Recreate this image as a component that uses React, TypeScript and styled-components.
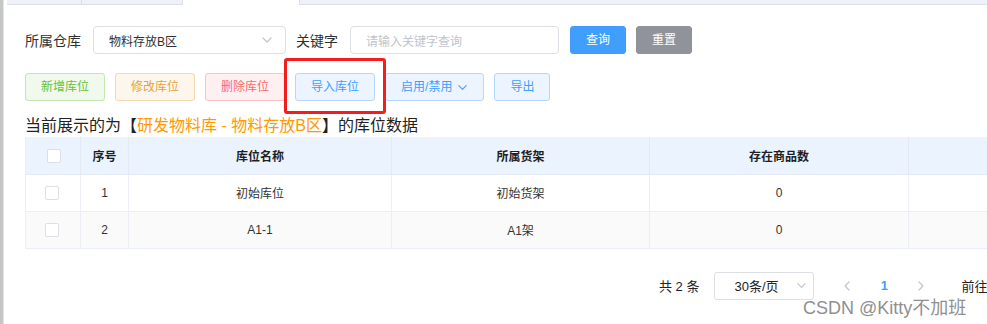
import React from "react";
import styled, { createGlobalStyle, css } from "styled-components";

const GlobalStyle = createGlobalStyle`
  html, body {
    margin: 0;
    padding: 0;
    background: #fff;
    overflow: hidden;
  }
  body {
    font-family: "Liberation Sans", "Noto Sans CJK SC", Arial, sans-serif;
    color: #303133;
  }
  * { box-sizing: border-box; }
`;

const Page = styled.div`
  display: flex;
  width: 987px;
  height: 324px;
  position: relative;
  overflow: hidden;
`;

const SideEdge = styled.div`
  width: 4px;
  flex: none;
  background: #c6c6c6;
  border-right: 1px solid #e4e4e4;
`;

const Main = styled.div`
  flex: 1;
  min-width: 0;
  overflow: hidden;
`;

/* tab strip cut off at the top */
const TabStrip = styled.div`
  display: flex;
  height: 5px;
  padding-left: 3px;
`;

const Tab = styled.div<{ $w: number }>`
  width: ${(p) => p.$w}px;
  flex: none;
  background: #eef1fa;
  border-right: 1px solid #dcdfe6;
  border-bottom: 1px solid #dcdfe6;
`;

const ActiveTab = styled.div`
  width: 116px;
  flex: none;
  background: #fff;
`;

const TabFill = styled.div`
  flex: 1;
  background: #eef1fa;
  border-left: 1px solid #dcdfe6;
  border-bottom: 1px solid #dcdfe6;
`;

const Content = styled.div`
  padding: 21px 0 0 21px;
  width: 1200px;
`;

const FilterForm = styled.div`
  display: flex;
  align-items: center;
  height: 28px;
`;

const FieldLabel = styled.span`
  font-size: 14px;
  color: #303133;
  padding-right: 12px;
  white-space: nowrap;
`;

const FieldBox = styled.div<{ $w: number; $gap: number }>`
  width: ${(p) => p.$w}px;
  height: 28px;
  border: 1px solid #dcdfe6;
  border-radius: 4px;
  display: flex;
  align-items: center;
  justify-content: space-between;
  padding: 0 12px 0 15px;
  font-size: 12px;
  color: #303133;
  margin-right: ${(p) => p.$gap}px;
  background: #fff;
`;

const Placeholder = styled.span`
  color: #c0c4cc;
`;

const SolidButton = styled.button<{ $tone: "primary" | "info" }>`
  height: 28px;
  padding: 0 15px;
  border-radius: 3px;
  border: 1px solid ${(p) => (p.$tone === "primary" ? "#409eff" : "#909399")};
  background: ${(p) => (p.$tone === "primary" ? "#409eff" : "#909399")};
  color: #fff;
  font-size: 12px;
  font-family: inherit;
  line-height: 1;

  & + & {
    margin-left: 10px;
  }
`;

const Toolbar = styled.div`
  display: flex;
  gap: 10px;
  margin-top: 19px;
  align-items: center;
`;

const tones = {
  success: css`
    color: #67c23a;
    background: #f0f9eb;
    border-color: #c2e7b0;
  `,
  warning: css`
    color: #e6a23c;
    background: #fdf6ec;
    border-color: #f5dab1;
  `,
  danger: css`
    color: #f56c6c;
    background: #fef0f0;
    border-color: #fbc4c4;
  `,
  primary: css`
    color: #409eff;
    background: #ecf5ff;
    border-color: #b3d8ff;
  `,
};

const PlainButton = styled.button<{ $tone: keyof typeof tones }>`
  height: 28px;
  padding: 0 15px;
  border: 1px solid;
  border-radius: 3px;
  font-size: 12px;
  font-family: inherit;
  line-height: 1;
  display: inline-flex;
  align-items: center;
  gap: 5px;
  ${(p) => tones[p.$tone]}
`;

const Marked = styled.span`
  position: relative;
  display: inline-flex;

  &::after {
    content: "";
    position: absolute;
    left: -11px;
    right: -11px;
    top: -15px;
    bottom: -13px;
    border: 3px solid #f41d1d;
    border-radius: 3px;
    pointer-events: none;
  }
`;

const Caption = styled.div`
  margin-top: 14px;
  font-size: 16px;
  line-height: 22px;
  color: #222;
  white-space: nowrap;
`;

const Highlight = styled.span`
  color: #ff9900;
`;

const Grid = styled.table`
  border-collapse: collapse;
  table-layout: fixed;
  width: 1083px;
  border-left: 1px solid #ebeef5;
  font-size: 12px;
`;

const HeadCell = styled.th`
  height: 37px;
  background: #ebf3fe;
  border-right: 1px solid #e4eaf3;
  border-bottom: 1px solid #e4eaf3;
  font-weight: bold;
  color: #1f1f1f;
  text-align: center;
  padding: 0;
`;

const Row = styled.tr<{ $striped?: boolean }>`
  background: ${(p) => (p.$striped ? "#fafafa" : "#fff")};
`;

const Cell = styled.td`
  height: 37px;
  border-right: 1px solid #ebeef5;
  border-bottom: 1px solid #ebeef5;
  text-align: center;
  color: #333;
  padding: 0;
`;

const Check = styled.span<{ $shift?: number }>`
  display: inline-block;
  width: 14px;
  height: 14px;
  border: 1px solid #dcdfe6;
  border-radius: 2px;
  background: #fff;
  vertical-align: middle;
  position: relative;
  left: ${(p) => p.$shift ?? 0}px;
`;

const Pagination = styled.div`
  display: flex;
  align-items: center;
  height: 28px;
  margin-top: 23px;
  padding-left: 634px;
  font-size: 13px;
  color: #222;
  white-space: nowrap;
`;

const Total = styled.span`
  margin-right: 15px;
`;

const SizeSelect = styled.div`
  width: 100px;
  height: 28px;
  border: 1px solid #dcdfe6;
  border-radius: 3px;
  display: flex;
  align-items: center;
  justify-content: space-between;
  padding: 0 6px 0 19px;
  margin-right: 18px;
`;

const PagerArrow = styled.span`
  width: 30px;
  display: flex;
  justify-content: center;
`;

const PagerNumber = styled.span`
  width: 36px;
  margin: 0 4px;
  text-align: center;
  color: #409eff;
  font-weight: bold;
`;

const Jumper = styled.span`
  margin-left: 25px;
`;

const Watermark = styled.div`
  position: absolute;
  left: 803px;
  top: 293px;
  font-family: "Liberation Sans", "Noto Sans CJK SC", sans-serif;
  font-size: 18px;
  color: #8f8f8f;
  text-shadow: 0 0 1px #fff;
  white-space: nowrap;
  pointer-events: none;
`;

const Chevron: React.FC<{ dir: "down" | "left" | "right"; color: string; size?: number }> = ({
  dir,
  color,
  size = 10,
}) => {
  const d =
    dir === "down" ? "M2 4 L6 8 L10 4" : dir === "left" ? "M8 2 L4 6 L8 10" : "M4 2 L8 6 L4 10";
  return (
    <svg width={size} height={size} viewBox="0 0 12 12" fill="none">
      <path d={d} stroke={color} strokeWidth="1.2" strokeLinecap="round" strokeLinejoin="round" />
    </svg>
  );
};

const rows = [
  { no: 1, name: "初始库位", shelf: "初始货架", count: 0 },
  { no: 2, name: "A1-1", shelf: "A1架", count: 0 },
];

const App: React.FC = () => {
  return (
    <>
      <GlobalStyle />
      <Page>
        <SideEdge />
        <Main>
          <TabStrip>
            <Tab $w={75} />
            <Tab $w={101} />
            <ActiveTab />
            <TabFill />
          </TabStrip>
          <Content>
            <FilterForm>
              <FieldLabel>所属仓库</FieldLabel>
              <FieldBox $w={193} $gap={10}>
                <span>物料存放B区</span>
                <Chevron dir="down" color="#c0c4cc" size={12} />
              </FieldBox>
              <FieldLabel>关键字</FieldLabel>
              <FieldBox $w={209} $gap={11}>
                <Placeholder>请输入关键字查询</Placeholder>
              </FieldBox>
              <SolidButton $tone="primary">查询</SolidButton>
              <SolidButton $tone="info">重置</SolidButton>
            </FilterForm>

            <Toolbar>
              <PlainButton $tone="success">新增库位</PlainButton>
              <PlainButton $tone="warning">修改库位</PlainButton>
              <PlainButton $tone="danger">删除库位</PlainButton>
              <Marked>
                <PlainButton $tone="primary">导入库位</PlainButton>
              </Marked>
              <PlainButton $tone="primary">
                启用/禁用
                <Chevron dir="down" color="#409eff" size={11} />
              </PlainButton>
              <PlainButton $tone="primary">导出</PlainButton>
            </Toolbar>

            <Caption>
              当前展示的为【<Highlight>研发物料库 - 物料存放B区</Highlight>】的库位数据
            </Caption>

            <Grid>
              <colgroup>
                <col style={{ width: 55 }} />
                <col style={{ width: 48 }} />
                <col style={{ width: 263 }} />
                <col style={{ width: 258 }} />
                <col style={{ width: 259 }} />
                <col style={{ width: 200 }} />
              </colgroup>
              <thead>
                <tr>
                  <HeadCell>
                    <Check $shift={1} />
                  </HeadCell>
                  <HeadCell>序号</HeadCell>
                  <HeadCell>库位名称</HeadCell>
                  <HeadCell>所属货架</HeadCell>
                  <HeadCell>存在商品数</HeadCell>
                  <HeadCell />
                </tr>
              </thead>
              <tbody>
                {rows.map((r, i) => (
                  <Row key={r.no} $striped={i % 2 === 1}>
                    <Cell>
                      <Check $shift={-1} />
                    </Cell>
                    <Cell>{r.no}</Cell>
                    <Cell>{r.name}</Cell>
                    <Cell>{r.shelf}</Cell>
                    <Cell>{r.count}</Cell>
                    <Cell />
                  </Row>
                ))}
              </tbody>
            </Grid>

            <Pagination>
              <Total>共 2 条</Total>
              <SizeSelect>
                <span>30条/页</span>
                <Chevron dir="down" color="#c0c4cc" size={11} />
              </SizeSelect>
              <PagerArrow>
                <Chevron dir="left" color="#c0c4cc" size={12} />
              </PagerArrow>
              <PagerNumber>1</PagerNumber>
              <PagerArrow>
                <Chevron dir="right" color="#c0c4cc" size={12} />
              </PagerArrow>
              <Jumper>前往</Jumper>
            </Pagination>
          </Content>
        </Main>
        <Watermark>CSDN @Kitty不加班</Watermark>
      </Page>
    </>
  );
};

export default App;
